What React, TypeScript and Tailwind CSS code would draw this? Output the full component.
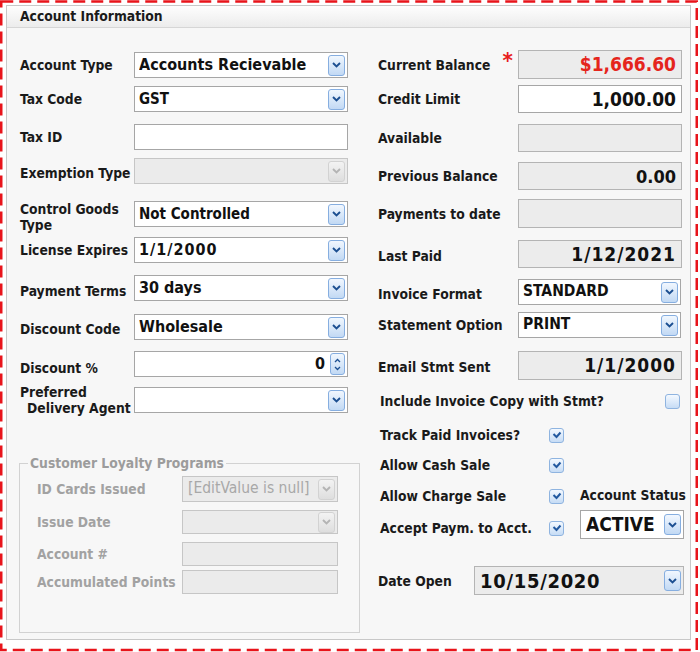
import type { ReactNode } from 'react';

function DropButton({ disabled }: { disabled?: boolean }) {
  return (
    <span
      className={
        disabled
          ? 'flex h-[21px] w-[17px] shrink-0 items-center justify-center rounded-[3px] border border-[#d2d2d2] bg-linear-to-b from-[#f3f3f3] to-[#dedede]'
          : 'flex h-[21px] w-[17px] shrink-0 items-center justify-center rounded-[3px] border border-[#86aee0] bg-linear-to-b from-[#f1f7fe] to-[#c2d9f4]'
      }
    >
      <svg width="9" height="6" viewBox="0 0 9 6">
        <path d="M1 1l3.5 3.5L8 1" fill="none" stroke={disabled ? '#b4b4b4' : '#1c4f91'} strokeWidth="1.9" />
      </svg>
    </span>
  );
}

function SpinButton() {
  return (
    <span className="flex h-[22px] w-[15px] shrink-0 flex-col items-center justify-center gap-[3px] rounded-[3px] border border-[#86aee0] bg-linear-to-b from-[#f1f7fe] to-[#c2d9f4]">
      <svg width="7" height="5" viewBox="0 0 7 5">
        <path d="M1 4l2.5-2.5L6 4" fill="none" stroke="#1c4f91" strokeWidth="1.3" />
      </svg>
      <svg width="7" height="5" viewBox="0 0 7 5">
        <path d="M1 1l2.5 2.5L6 1" fill="none" stroke="#1c4f91" strokeWidth="1.3" />
      </svg>
    </span>
  );
}

function Check({ checked }: { checked?: boolean }) {
  return (
    <span className="flex h-[15px] w-[15px] shrink-0 items-center justify-center rounded-[3px] border border-[#8fb4e0] bg-linear-to-b from-[#f4f9ff] to-[#c6dcf5]">
      {checked && (
        <svg width="10" height="8" viewBox="0 0 10 8">
          <path d="M1.5 3l3 3 4-4.5" fill="none" stroke="#23599f" strokeWidth="2" />
        </svg>
      )}
    </span>
  );
}

function Field({
  className,
  children,
  combo,
  spin,
  disabled,
}: {
  className: string;
  children?: ReactNode;
  combo?: boolean;
  spin?: boolean;
  disabled?: boolean;
}) {
  return (
    <div className={`flex shrink-0 items-center border ${className}`}>
      <div className="min-w-0 flex-1 truncate">{children}</div>
      {combo && (
        <span className="mr-[2px]">
          <DropButton disabled={disabled} />
        </span>
      )}
      {spin && (
        <span className="ml-[5px] mr-[2px]">
          <SpinButton />
        </span>
      )}
    </div>
  );
}

function Label({ children, className }: { children: ReactNode; className: string }) {
  return (
    <div className={`shrink-0 whitespace-nowrap text-[13.75px] font-bold leading-[16px] text-[#1a1a1a] ${className}`}>
      {children}
    </div>
  );
}

const white = 'border-[#a6a6a6] bg-white';
const ro = 'border-[#b4b4b4] bg-[#ececec]';
const off = 'border-[#c6c6c6] bg-[#ebebeb]';

export default function App() {
  return (
    <div className="relative h-[652px] w-[700px] bg-white pl-[6px] pt-[5px] font-['Tahoma','DejaVu_Sans_Condensed','DejaVu_Sans',sans-serif] text-[#111]">
      <div className="h-[635px] w-[685px] border border-[#c8c8c8] bg-[#f7f7f7]">
        <div className="flex h-[22px] items-center border-b border-[#d6d6d6] bg-linear-to-b from-[#fefefe] to-[#ececec] pl-[13px] text-[13.75px] font-bold text-[#1a1a1a]">
          Account Information
        </div>

        <div className="flex pl-[13px]">
          {/* left column */}
          <div className="flex w-[341px] shrink-0 flex-col">
            <div className="mt-[24px] flex h-[26px] items-center">
              <Label className="w-[114px]">Account Type</Label>
              <Field className={`h-[26px] w-[214px] pl-[4px] text-[16px] font-bold ${white}`} combo>
                Accounts Recievable
              </Field>
            </div>
            <div className="mt-[8px] flex h-[26px] items-center">
              <Label className="w-[114px]">Tax Code</Label>
              <Field className={`h-[26px] w-[214px] pl-[4px] text-[15px] font-bold ${white}`} combo>
                GST
              </Field>
            </div>
            <div className="mt-[12px] flex h-[26px] items-center">
              <Label className="w-[114px]">Tax ID</Label>
              <Field className={`h-[26px] w-[214px] ${white}`} />
            </div>
            <div className="mt-[8px] flex h-[26px] items-center">
              <Label className="w-[114px] pt-[3px]">Exemption Type</Label>
              <Field className={`h-[26px] w-[214px] ${off}`} combo disabled />
            </div>
            <div className="mt-[17px] flex h-[26px] items-center">
              <Label className="w-[114px] pt-[6px]">
                Control Goods
                <br />
                Type
              </Label>
              <Field className={`h-[26px] w-[214px] pl-[4px] text-[15px] font-bold ${white}`} combo>
                Not Controlled
              </Field>
            </div>
            <div className="mt-[10px] flex h-[26px] items-center">
              <Label className="w-[114px]">License Expires</Label>
              <Field className={`h-[26px] w-[214px] pl-[4px] text-[16px] font-bold tracking-[1px] ${white}`} combo>
                1/1/2000
              </Field>
            </div>
            <div className="mt-[12px] flex h-[26px] items-center">
              <Label className="w-[114px] pt-[5px]">Payment Terms</Label>
              <Field className={`h-[26px] w-[214px] pl-[4px] text-[16px] font-bold ${white}`} combo>
                30 days
              </Field>
            </div>
            <div className="mt-[13px] flex h-[26px] items-center">
              <Label className="w-[114px] pt-[3px]">Discount Code</Label>
              <Field className={`h-[26px] w-[214px] pl-[4px] text-[16px] font-bold ${white}`} combo>
                Wholesale
              </Field>
            </div>
            <div className="mt-[11px] flex h-[26px] items-center">
              <Label className="w-[114px] pt-[8px]">Discount %</Label>
              <Field className={`h-[26px] w-[214px] text-right text-[16px] font-bold ${white}`} spin>
                0
              </Field>
            </div>
            <div className="mt-[10px] flex h-[26px] items-center">
              <Label className="w-[114px]">
                Preferred
                <br />
                <span className="pl-[7px]">Delivery Agent</span>
              </Label>
              <Field className={`h-[26px] w-[214px] ${white}`} combo />
            </div>

            <div className="relative -ml-px mt-[50px] h-[170px] w-[341px] border border-[#d2d2d2] pl-[17px]">
              <div className="absolute -top-[9px] left-[8px] bg-[#f7f7f7] px-[2px] text-[13.75px] font-bold leading-[16px] text-[#9c9c9c]">
                Customer Loyalty Programs
              </div>
              <div className="mt-[12px] flex h-[26px] items-center">
                <Label className="w-[145px] !text-[#a2a2a2]">ID Cards Issued</Label>
                <Field className={`h-[26px] w-[156px] pl-[5px] text-[15.5px] text-[#a8a8a8] ${off}`} combo disabled>
                  [EditValue is null]
                </Field>
              </div>
              <div className="mt-[8px] flex h-[24px] items-center">
                <Label className="w-[145px] !text-[#a2a2a2]">Issue Date</Label>
                <Field className={`h-[24px] w-[156px] ${off}`} combo disabled />
              </div>
              <div className="mt-[8px] flex h-[24px] items-center">
                <Label className="w-[145px] !text-[#a2a2a2]">Account #</Label>
                <Field className={`h-[24px] w-[156px] ${off}`} />
              </div>
              <div className="mt-[4px] flex h-[24px] items-center">
                <Label className="w-[145px] !text-[#a2a2a2]">Accumulated Points</Label>
                <Field className={`h-[24px] w-[156px] ${off}`} />
              </div>
            </div>
          </div>

          {/* right column */}
          <div className="ml-[17px] flex w-[306px] shrink-0 flex-col">
            <div className="mt-[22px] flex h-[28px] items-center">
              <Label className="flex w-[140px] items-start">
                <span className="pt-[2px]">Current Balance</span>
                <span className="-mt-[5px] ml-[12px] text-[22px] leading-[22px] text-[#e8201c]">*</span>
              </Label>
              <Field className={`h-[29px] w-[164px] pr-[5px] text-right text-[19px] font-bold text-[#e5251c] ${ro}`}>
                $1,666.60
              </Field>
            </div>
            <div className="mt-[7px] flex h-[28px] items-center">
              <Label className="w-[140px]">Credit Limit</Label>
              <Field className={`h-[28px] w-[164px] pr-[5px] text-right text-[19px] font-bold ${white}`}>1,000.00</Field>
            </div>
            <div className="mt-[11px] flex h-[28px] items-center">
              <Label className="w-[140px]">Available</Label>
              <Field className={`h-[28px] w-[164px] ${ro}`} />
            </div>
            <div className="mt-[10px] flex h-[28px] items-center">
              <Label className="w-[140px]">Previous Balance</Label>
              <Field className={`h-[28px] w-[164px] pr-[5px] text-right text-[18px] font-bold ${ro}`}>0.00</Field>
            </div>
            <div className="mt-[9px] flex h-[29px] items-center">
              <Label className="w-[140px]">Payments to date</Label>
              <Field className={`h-[29px] w-[164px] ${ro}`} />
            </div>
            <div className="mt-[12px] flex h-[28px] items-center">
              <Label className="w-[140px] pt-[4px]">Last Paid</Label>
              <Field className={`h-[28px] w-[164px] pr-[5px] text-right text-[19px] font-bold tracking-[1px] ${ro}`}>
                1/12/2021
              </Field>
            </div>
            <div className="mt-[11px] flex h-[26px] items-center">
              <Label className="w-[140px] pt-[3px]">Invoice Format</Label>
              <Field className={`h-[26px] w-[163px] pl-[4px] text-[15.5px] font-bold ${white}`} combo>
                STANDARD
              </Field>
            </div>
            <div className="mt-[7px] flex h-[26px] items-center">
              <Label className="w-[140px]">Statement Option</Label>
              <Field className={`h-[26px] w-[163px] pl-[4px] text-[15.5px] font-bold ${white}`} combo>
                PRINT
              </Field>
            </div>
            <div className="mt-[13px] flex h-[28px] items-center">
              <Label className="w-[140px] pt-[3px]">Email Stmt Sent</Label>
              <Field className={`h-[29px] w-[164px] pr-[5px] text-right text-[19px] font-bold tracking-[1px] ${ro}`}>
                1/1/2000
              </Field>
            </div>
            <div className="mt-[12px] flex h-[20px] items-center justify-between pl-[2px] pr-[4px]">
              <Label className="">Include Invoice Copy with Stmt?</Label>
              <Check />
            </div>

            <div className="flex">
              <div className="flex w-[202px] shrink-0 flex-col pl-[2px]">
                <div className="mt-[14px] flex h-[20px] items-center">
                  <Label className="w-[169px]">Track Paid Invoices?</Label>
                  <Check checked />
                </div>
                <div className="mt-[10px] flex h-[20px] items-center">
                  <Label className="w-[169px]">Allow Cash Sale</Label>
                  <Check checked />
                </div>
                <div className="mt-[11px] flex h-[20px] items-center">
                  <Label className="w-[169px]">Allow Charge Sale</Label>
                  <Check checked />
                </div>
                <div className="mt-[12px] flex h-[20px] items-center">
                  <Label className="w-[169px]">Accept Paym. to Acct.</Label>
                  <Check checked />
                </div>
              </div>
              <div className="flex flex-col">
                <Label className="mt-[76px]">Account Status</Label>
                <Field className={`mt-[7px] h-[29px] w-[104px] pl-[5px] text-[19px] font-bold ${white}`} combo>
                  ACTIVE
                </Field>
              </div>
            </div>

            <div className="mt-[27px] flex h-[29px] items-center">
              <Label className="w-[96px]">Date Open</Label>
              <Field className={`h-[29px] w-[210px] pl-[5px] text-[20px] font-bold tracking-[0.7px] ${ro}`} combo>
                10/15/2020
              </Field>
            </div>
          </div>
        </div>
      </div>

      <svg className="pointer-events-none absolute inset-0" width="700" height="652">
        <rect x="1.25" y="1.5" width="695.5" height="648.5" fill="none" stroke="#e8141b" strokeWidth="2.5" strokeDasharray="12 6" />
      </svg>
    </div>
  );
}
